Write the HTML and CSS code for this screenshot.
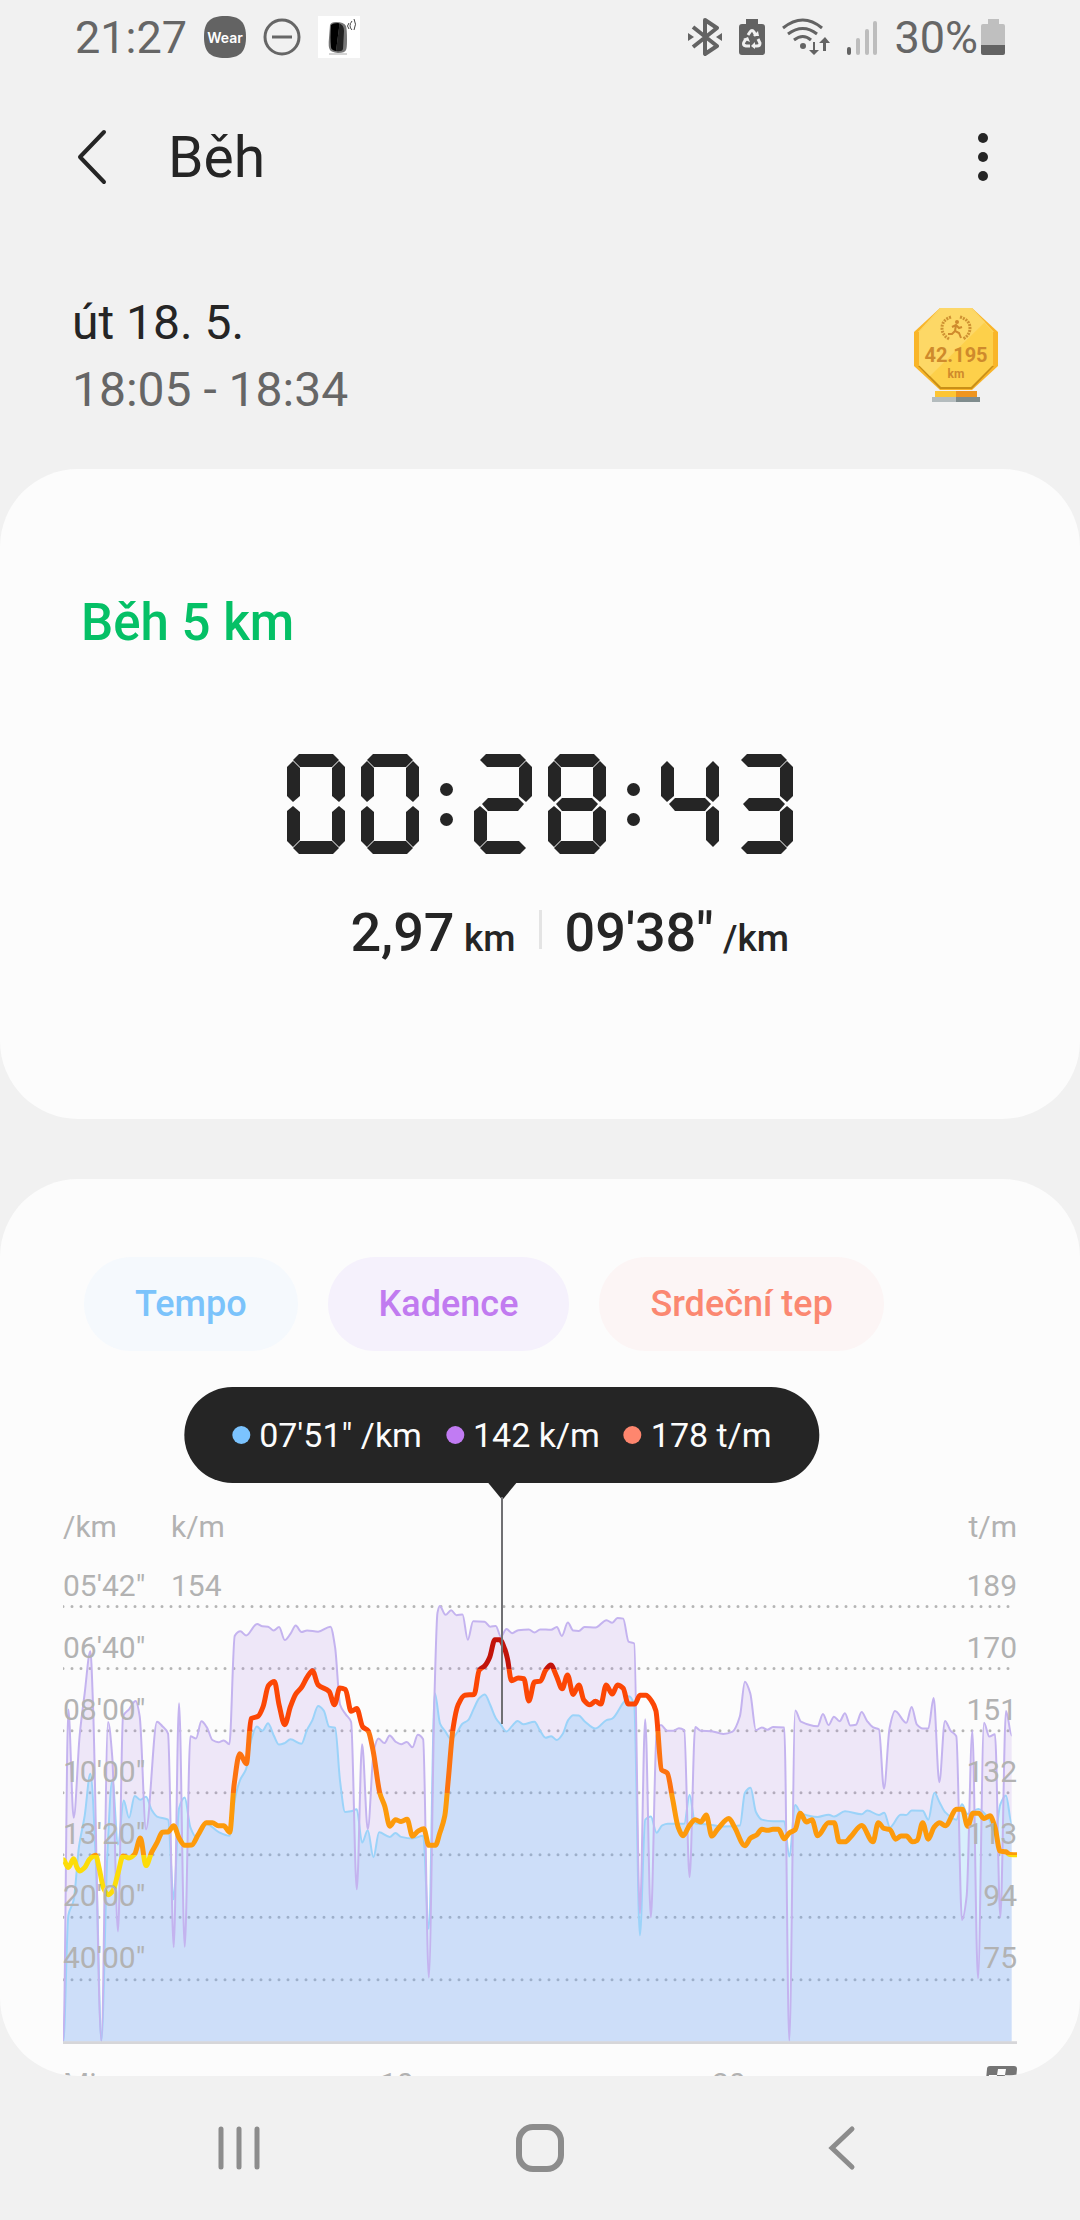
FILE: index.html
```html
<!DOCTYPE html>
<html lang="cs">

<head>
    <meta charset="UTF-8">
    <meta name="viewport" content="width=device-width, initial-scale=1.0">
    <title>Běh</title>

    <link rel="stylesheet" href="styles.css">
</head>

<body>
    <!-- Stavový řádek -->
    <div class="status-bar">
        <div class="status-group">
            <span>21:27</span>
            <svg width="42" height="42" viewBox="0 0 42 42">
                <path d="M21 0C36 0 42 6 42 21S36 42 21 42 0 36 0 21 6 0 21 0Z" fill="#636363"/>
                <text class="wear" x="21" y="27" text-anchor="middle">Wear</text>
            </svg>
            <svg width="38" height="38" viewBox="0 0 38 38" fill="none" stroke="#666">
                <circle cx="19" cy="19" r="17" stroke-width="3"/>
                <path d="M9 19h20" stroke-width="3"/>
            </svg>
            <svg width="42" height="42" viewBox="0 0 42 42">
                <rect width="42" height="42" fill="#fff"/>
                <path d="M12 9q1-3 6-3 8 0 10 4 1 3 1 14 0 8-1 10-1 3-8 3-7-1-8-3-2-3-1-12Z" fill="#777"/>
                <path d="M13 9q2-2 7-2 2 0 1 5l-3 23q-5-1-5-4-1-9 0-22Z" fill="#000"/>
                <path d="M20 7q2 0 1 5l-3 23q6 1 7-2l1-18q0-7-6-8Z" fill="#222"/>
                <path d="M11 38h18" stroke="#aaa" stroke-width="1"/>
                <path d="M31 7q-3 3 0 6M34 5q-4 5 0 9M36 3q3 5 0 11" fill="none" stroke="#444" stroke-width="1"/>
            </svg>
        </div>

        <div class="status-group">
            <svg width="34" height="38" viewBox="0 0 34 38">
                <path d="M5 9 29 28 17 36V2L29 10 5 29" fill="none" stroke="#636363" stroke-width="4" stroke-linejoin="round"/>
                <path d="M0 15v8l6-4ZM34 15v8l-6-4Z" fill="#636363"/>
            </svg>
            <svg width="26" height="36" viewBox="0 0 26 36">
                <path d="M7 0h12v5h4q3 0 3 3v25q0 3-3 3H3q-3 0-3-3V8q0-3 3-3h4Z" fill="#636363"/>
                <path d="M9 16l2-3q2-3 4 0l2 4M19 20l2 4q0 3-3 3h-3M11 27H7q-4-1-2-4l2-3" fill="none" stroke="#f1f1f1" stroke-width="3"/>
                <path d="M14 17h6l-1-5ZM16 23v7l-4-3ZM4 20l5-2 2 5Z" fill="#f1f1f1"/>
            </svg>
            <svg width="48" height="38" viewBox="0 0 48 38">
                <path d="M1 10q20-16 39 0M6 16q15-11 29 0M12 22q9-7 17 0" fill="none" stroke="#636363" stroke-width="3"/>
                <circle cx="21" cy="28" r="3" fill="#636363"/>
                <path d="M31 24v8h-4l5 5 5-5h-4v-8ZM41 33v-8h-4l6-6 5 6h-4v8Z" fill="#636363"/>
            </svg>
            <svg width="30" height="36" viewBox="0 0 30 36" stroke-width="4" stroke-linecap="round">
                <path d="M2 30v4" stroke="#636363"/>
                <path d="M11 21v13M20 12v22M28 4v30" stroke="#bdbdbd"/>
            </svg>
            <span class="battery">
                <span>30%</span>
                <svg width="24" height="36" viewBox="0 0 24 36">
                    <path d="M7 0h11v5h4q2 0 2 2v19H0V7q0-2 2-2h5Z" fill="#bfbfbf"/>
                    <path d="M0 26h24v8q0 2-2 2H2q-2 0-2-2Z" fill="#636363"/>
                </svg>
            </span>
        </div>
    </div>

    <header class="top-bar">
        <a class="back" href="#" aria-label="Zpět">
            <svg width="32" height="56" viewBox="0 0 32 56">
                <path d="M28 3 4 28l24 25" fill="none" stroke="#252525" stroke-width="4" stroke-linecap="round" stroke-linejoin="round"/>
            </svg>
        </a>
        <h1>Běh</h1>
        <button class="more" type="button" aria-label="Další možnosti">
            <svg width="10" height="48" viewBox="0 0 10 48" fill="#252525">
                <circle cx="5" cy="5" r="5"/>
                <circle cx="5" cy="24" r="5"/>
                <circle cx="5" cy="43" r="5"/>
            </svg>
        </button>
    </header>

    <main>
        <section class="date">
            <div>
                <p>út 18. 5.</p>
                <p class="date-time">18:05 - 18:34</p>
            </div>
            <!-- Odznak za vzdálenost -->
            <svg width="84" height="96" viewBox="0 0 84 96">
                <path d="M26 0h32l26 24v34L58 82H26L0 58V24Z" fill="#f9b529"/>
                <path d="M26 0h32l22 24H4Z" fill="#fcd769"/>
                <path d="M4 58 26 81h32l22-23Z" fill="#c98f17"/>
                <path d="M26 2h32l21 22v33L57 79H27L5 57V24Z" fill="#fdd04a"/>
                <path d="M26 2h32l13 12L16 68 5 57V24Z" fill="#fdd866"/>
                <g fill="none" stroke="#cf9232" stroke-width="3" stroke-dasharray="2 1">
                    <path d="M37 9q-9 3-9 11 0 7 7 11"/>
                    <path d="M46 9q10 3 10 11 0 7-7 11"/>
                </g>
                <circle cx="43" cy="14" r="2" fill="#cf8a2c"/>
                <path d="M42 17l-1 6 4 2 2 5M41 23l-3 3h-4M38 19l4-2 3 3 3-1" fill="none" stroke="#cf8a2c" stroke-width="2"/>
                <text class="badge-value" x="42" y="54" text-anchor="middle">42.195</text>
                <text class="badge-unit" x="42" y="70" text-anchor="middle">km</text>
                <path d="M21 83h21v7H21Z" fill="#fdc534"/>
                <path d="M42 83h21v7H42Z" fill="#ee951f"/>
                <path d="M18 89h24v5H18Z" fill="#b4bcbe"/>
                <path d="M42 89h24v5H42Z" fill="#7f8c8d"/>
            </svg>
        </section>

        <section class="card summary">
            <h2>Běh 5 km</h2>
            <div class="timer" id="timer" role="timer" aria-label="00:28:43"></div>
            <div class="stats">
                <p class="distance">2,97 <small>km</small></p>
                <span class="divider"></span>
                <p>09'38" <small>/km</small></p>
            </div>
        </section>

        <section class="card graph">
            <div class="chips">
                <button class="chip tempo" type="button">Tempo</button>
                <button class="chip kadence" type="button">Kadence</button>
                <button class="chip tep" type="button">Srdeční tep</button>
            </div>

            <div class="chart">
                <div class="tooltip">
                    <span class="dot tempo-dot"></span>07'51" /km
                    <span class="dot kadence-dot"></span>142 k/m
                    <span class="dot tep-dot"></span>178 t/m
                </div>
                <div class="cursor"></div>

                <div class="units">
                    <span>/km</span>
                    <span>k/m</span>
                    <span class="right">t/m</span>
                </div>

                <div class="plot">
                    <svg id="plot" viewBox="70 140 2861 1306" preserveAspectRatio="none">
                        <defs>
                            <!-- Barvy tepových zón -->
                            <linearGradient id="zones" gradientUnits="userSpaceOnUse" x1="0" y1="303" x2="0" y2="1440">
                                <stop offset="14.3%" stop-color="#c2140a"/>
                                <stop offset="14.3%" stop-color="#fc4705"/>
                                <stop offset="28.6%" stop-color="#fc4705"/>
                                <stop offset="28.6%" stop-color="#fd7310"/>
                                <stop offset="42.9%" stop-color="#fd7310"/>
                                <stop offset="42.9%" stop-color="#fd9a0b"/>
                                <stop offset="57.2%" stop-color="#fd9a0b"/>
                                <stop offset="57.2%" stop-color="#fcdc0a"/>
                            </linearGradient>
                        </defs>
                        <path class="grid-line" d="M70 303H2916M70 465H2916M70 628H2916M70 790H2916M70 952H2916M70 1115H2916M70 1278H2916"/>
                        <path class="kadence-area" id="kadence-area"/>
                        <path class="tempo-area" id="tempo-area"/>
                        <path class="tempo-line" id="tempo-line"/>
                        <path class="kadence-line" id="kadence-line"/>
                        <path class="base-line" d="M70 1443H2931"/>
                        <path class="tep-line" id="tep-line"/>
                    </svg>
                    <div class="labels">
                        <span>05'42"</span>
                        <span>06'40"</span>
                        <span>08'00"</span>
                        <span>10'00"</span>
                        <span>13'20"</span>
                        <span>20'00"</span>
                        <span>40'00"</span>
                    </div>
                    <div class="labels middle">
                        <span>154</span>
                    </div>
                    <div class="labels right">
                        <span>189</span>
                        <span>170</span>
                        <span>151</span>
                        <span>132</span>
                        <span>113</span>
                        <span>94</span>
                        <span>75</span>
                    </div>
                </div>

                <div class="minutes">
                    <span>Min.</span>
                    <span>10</span>
                    <span>20</span>
                    <svg width="32" height="32" viewBox="0 0 32 32">
                        <path d="M5 0h24q3 0 3 3l-2 21H0L2 3q0-3 3-3Z" fill="#757575"/>
                        <path d="M13 3h8l-1 6h-8ZM4 9h8l-1 7H3ZM20 9h8l-1 7h-8Z" fill="#fcfcfc"/>
                    </svg>
                </div>
            </div>
        </section>
    </main>

    <nav class="nav-bar">
        <button type="button" aria-label="Poslední aplikace">
            <svg width="44" height="48" viewBox="0 0 44 48" stroke="#8c8c8c" stroke-width="5" stroke-linecap="round">
                <path d="M4 5v38M22 5v38M40 5v38"/>
            </svg>
        </button>
        <button type="button" aria-label="Domů">
            <svg width="48" height="48" viewBox="0 0 48 48">
                <rect x="3" y="3" width="42" height="42" rx="14" fill="none" stroke="#8c8c8c" stroke-width="6"/>
            </svg>
        </button>
        <button type="button" aria-label="Zpět">
            <svg width="30" height="48" viewBox="0 0 30 48">
                <path d="M26 5 6 24l20 19" fill="none" stroke="#8c8c8c" stroke-width="5" stroke-linecap="round"/>
            </svg>
        </button>
    </nav>

    <script src="graph.js"></script>
</body>

</html>
```

FILE: styles.css
```css
* {
    box-sizing: border-box;
}

body {
    margin: 0;
    height: 100vh;
    display: flex;
    flex-direction: column;
    background-color: #f1f1f1;
    color: #252525;
    font-family: Roboto, "Noto Sans", sans-serif;
}

h1, h2, p {
    margin: 0;
    font-weight: 400;
}

button {
    border: none;
    padding: 0;
    background: none;
    font-family: inherit;
    cursor: pointer;
}

svg {
    display: block;
}

/* Stavový řádek */
.status-bar {
    display: flex;
    justify-content: space-between;
    align-items: center;
    height: 74px;
    padding: 0 75px;
    color: #666;
    font-size: 45px;
}

.status-group {
    display: flex;
    align-items: center;
    gap: 17px;
}

.battery {
    display: flex;
    align-items: center;
    gap: 3px;
}

.wear {
    fill: #fff;
    font-family: Inter, Roboto, sans-serif;
    font-size: 14px;
    font-weight: 600;
}

/* Hlavička */
.top-bar {
    display: flex;
    align-items: center;
    height: 166px;
    padding: 0 92px 0 76px;
}

.top-bar h1 {
    flex: 1;
    margin-left: 60px;
    font-size: 57px;
}

main {
    flex: 1;
    min-height: 0;
    overflow: hidden;
    border-radius: 0 0 78px 78px;
}

.date {
    display: flex;
    justify-content: space-between;
    align-items: center;
    padding: 49px 82px 46px 72px;
    font-size: 48px;
    line-height: 67px;
}

.date-time {
    color: #666;
}

.badge-value, .badge-unit {
    fill: #cf8a2c;
    font-weight: 700;
}

.badge-value {
    font-size: 20px;
}

.badge-unit {
    font-size: 12px;
}

.card {
    background-color: #fcfcfc;
    border-radius: 78px;
}

/* Souhrn běhu */
.summary {
    padding: 124px 81px 154px;
    margin-bottom: 60px;
}

.summary h2 {
    color: #05c066;
    font-size: 51px;
    font-weight: 500;
    line-height: 60px;
}

.timer {
    display: flex;
    justify-content: center;
    gap: 16px;
    margin: 101px 0 47px;
}

/* Segmentová číslice, segmenty leží přes sebe v jedné buňce */
.digit {
    display: grid;
    width: 58px;
    height: 100px;
}

.digit i {
    grid-area: 1 / 1;
    background-color: #252525;
}

.seg-a { clip-path: polygon(6px 6px, 12px 0, 46px 0, 52px 6px, 45px 13px, 13px 13px); }
.seg-b { clip-path: polygon(52px 7px, 58px 13px, 58px 42px, 52px 48px, 45px 42px, 45px 14px); }
.seg-c { clip-path: polygon(52px 52px, 58px 57px, 58px 87px, 52px 93px, 45px 86px, 45px 58px); }
.seg-d { clip-path: polygon(6px 94px, 13px 87px, 45px 87px, 52px 94px, 46px 100px, 12px 100px); }
.seg-e { clip-path: polygon(6px 52px, 13px 58px, 13px 86px, 6px 93px, 0 87px, 0 57px); }
.seg-f { clip-path: polygon(6px 7px, 13px 14px, 13px 42px, 6px 48px, 0 42px, 0 13px); }
.seg-g { clip-path: polygon(8px 50px, 14px 44px, 44px 44px, 50px 50px, 44px 57px, 14px 57px); }

.colon {
    display: flex;
    flex-direction: column;
    align-items: center;
    gap: 17px;
    width: 23px;
    padding-top: 29px;
}

.colon i {
    width: 13px;
    height: 13px;
    border-radius: 50%;
    background-color: #252525;
}

.stats {
    display: grid;
    grid-template-columns: 1fr 3px 1fr;
    gap: 23px;
    font-size: 54px;
    line-height: 64px;
}

.stats p {
    font-weight: 500;
}

.stats small {
    margin-left: -4px;
    font-size: 37px;
    line-height: 1;
}

.distance {
    text-align: right;
}

.divider {
    height: 39px;
    margin-top: 9px;
    background-color: #e4e4e4;
}

/* Graf */
.graph {
    padding: 78px 63px 0;
}

.chips {
    display: flex;
    gap: 30px;
    margin: 0 21px 36px;
}

.chip {
    height: 94px;
    padding: 0 51px;
    border-radius: 47px;
    font-size: 36px;
    font-weight: 500;
}

.tempo {
    color: #7bc3fb;
    background-color: #f5f9fd;
}

.kadence {
    color: #c17bf0;
    background-color: #f5f1fc;
}

.tep {
    color: #fb8871;
    background-color: #fcf5f5;
}

.chart {
    position: relative;
    padding-top: 122px;
    color: #b2b2b2;
    font-size: 30px;
    line-height: 35px;
}

.tooltip {
    position: absolute;
    top: 0;
    left: 46%;
    transform: translateX(-50%);
    display: flex;
    align-items: center;
    height: 96px;
    padding: 0 48px;
    border-radius: 48px;
    background-color: #252525;
    color: #fcfcfc;
    font-size: 34px;
    white-space: nowrap;
}

.tooltip::after {
    content: "";
    position: absolute;
    top: 100%;
    left: 50%;
    margin-left: -14px;
    border: 14px solid transparent;
    border-top: 17px solid #252525;
    border-bottom: 0;
}

.cursor {
    position: absolute;
    top: 110px;
    left: 46%;
    margin-left: -1px;
    width: 2px;
    height: 227px;
    background-color: #707073;
    z-index: 1;
}

.dot {
    width: 18px;
    height: 18px;
    margin: 0 9px 0 24px;
    border-radius: 50%;
}

.dot:first-child {
    margin-left: 0;
}

.tempo-dot {
    background-color: #7bc3fe;
}

.kadence-dot {
    background-color: #c17bf3;
}

.tep-dot {
    background-color: #fe866e;
}

.units, .plot {
    display: grid;
    grid-template-columns: 108px 1fr 1fr;
}

.right {
    text-align: right;
}

/* Popisky leží přes graf ve stejném řádku mřížky */
.plot svg {
    grid-area: 1 / 1 / 2 / 4;
    width: 100%;
    height: 500px;
}

.labels {
    grid-row: 1;
    grid-column: 1;
    display: grid;
    grid-template-rows: repeat(7, 62px);
}

.labels.middle {
    grid-column: 2;
}

.labels.right {
    grid-column: 3;
}

.labels span {
    align-self: end;
    padding-bottom: 3px;
}

.plot path {
    fill: none;
    vector-effect: non-scaling-stroke;
    stroke-linejoin: round;
}

.plot .grid-line {
    stroke: #b5b5b5;
    stroke-width: 3px;
    stroke-linecap: round;
    stroke-dasharray: 0 9;
}

.plot .base-line {
    stroke: #d6d6d9;
    stroke-width: 3px;
}

.plot .kadence-area {
    fill: rgba(170, 130, 232, 0.17);
}

.plot .tempo-area {
    fill: rgba(75, 188, 253, 0.2);
}

.plot .kadence-line {
    stroke: #c4b3ef;
    stroke-width: 2px;
}

.plot .tempo-line {
    stroke: #9bd3f9;
    stroke-width: 2px;
}

.plot .tep-line {
    stroke: url(#zones);
    stroke-width: 5px;
}

.minutes {
    display: grid;
    grid-template-columns: 317fr 332fr 273fr 32px;
    margin-top: 22px;
}

/* Navigační lišta */
.nav-bar {
    display: grid;
    grid-template-columns: repeat(3, 1fr);
    height: 144px;
    padding: 0 88px;
}

.nav-bar button {
    display: flex;
    justify-content: center;
    align-items: center;
}
```

FILE: graph.js
```js
// Segmenty rozsvícené pro každou číslici
const segmenty = {
    0: 'abcdef', 1: 'bc', 2: 'abged', 3: 'abgcd', 4: 'fgbc',
    5: 'afgcd', 6: 'afgedc', 7: 'abc', 8: 'abcdefg', 9: 'abcdfg'
};

function vykresliCas(cas) {
    const timer = document.getElementById('timer');
    for (const znak of cas) {
        const prvek = document.createElement('span');
        if (znak === ':') {
            prvek.className = 'colon';
            prvek.innerHTML = '<i></i><i></i>';
        } else {
            prvek.className = 'digit';
            for (const s of segmenty[znak]) {
                prvek.innerHTML += '<i class="seg-' + s + '"></i>';
            }
        }
        timer.appendChild(prvek);
    }
}

// Body grafu: x, y, x, y, ...
const kadence = [
    71,1440, 86,572, 102,855, 120,640, 135,530, 152,420, 160,560, 185,1438, 205,605, 218,700, 235,1152, 250,590,
    268,572, 288,550, 300,590, 319,885, 352,604, 368,616, 385,635, 402,1193, 418,556, 435,1192, 452,642, 469,648,
    485,603, 502,620, 518,652, 536,658, 552,653, 569,663, 585,380, 602,368, 619,379, 652,349, 668,355, 685,356,
    702,366, 718,357, 735,391, 752,375, 768,353, 785,370, 802,366, 835,369, 872,356, 886,410, 901,560, 918,585,
    934,605, 951,1042, 967,663, 984,885, 1002,680, 1016,648, 1034,660, 1050,640, 1067,656, 1084,663, 1101,657,
    1118,671, 1134,638, 1150,650, 1167,1272, 1184,540, 1193,320, 1200,302, 1217,325, 1234,313, 1250,326, 1268,324,
    1284,390, 1300,342, 1334,343, 1351,356, 1368,354, 1383,382, 1400,362, 1417,373, 1435,365, 1467,363, 1484,371,
    1501,363, 1534,364, 1551,357, 1566,380, 1584,345, 1600,366, 1617,367, 1634,357, 1667,358, 1700,339, 1717,346,
    1733,333, 1750,335, 1766,395, 1783,400, 1800,1105, 1816,598, 1833,1115, 1850,640, 1863,613, 1882,628, 1900,628,
    1917,621, 1933,626, 1949,1010, 1966,618, 1983,628, 2015,629, 2050,636, 2078,630, 2100,590, 2115,500, 2131,530,
    2148,626, 2166,619, 2183,625, 2199,618, 2233,619, 2248,1438, 2266,575, 2283,604, 2333,616, 2349,584, 2366,613,
    2382,591, 2399,603, 2415,582, 2431,614, 2448,612, 2465,579, 2482,603, 2500,619, 2517,624, 2532,779, 2549,620,
    2565,576, 2599,607, 2615,566, 2631,612, 2648,622, 2665,622, 2681,542, 2698,762, 2715,602, 2732,628, 2749,642,
    2766,1122, 2780,1060, 2797,628, 2814,1275, 2832,607, 2848,643, 2865,637, 2881,1115, 2898,576, 2915,640
];

const tempo = [
    71,1440, 86,1110, 102,1070, 118,930, 135,850, 152,740, 170,1000, 185,1438, 203,950, 218,755, 235,925, 252,810,
    268,855, 285,798, 302,808, 319,800, 336,835, 352,852, 385,860, 402,1068, 418,830, 435,802, 452,880, 469,905,
    502,872, 536,892, 569,902, 587,800, 602,755, 619,728, 635,650, 651,617, 668,628, 685,608, 702,640, 718,664,
    735,660, 752,650, 785,662, 802,625, 818,600, 835,563, 852,575, 868,617, 886,620, 901,760, 916,840, 934,838,
    951,833, 967,920, 984,888, 1001,958, 1018,893, 1050,905, 1067,895, 1084,905, 1118,909, 1150,902, 1167,1145,
    1185,530, 1201,610, 1217,630, 1234,650, 1250,635, 1267,610, 1285,600, 1302,570, 1318,543, 1335,533, 1351,560,
    1368,595, 1383,612, 1400,630, 1417,615, 1433,602, 1450,611, 1484,604, 1501,628, 1517,646, 1534,642, 1551,652,
    1568,637, 1585,600, 1600,587, 1617,588, 1634,603, 1667,622, 1700,600, 1717,596, 1750,555, 1767,538, 1783,560,
    1800,1162, 1816,860, 1833,852, 1850,894, 1867,875, 1884,871, 1933,871, 1949,795, 1966,870, 2000,872, 2050,878,
    2100,875, 2115,790, 2132,777, 2148,840, 2166,860, 2200,864, 2233,864, 2248,956, 2266,822, 2283,843, 2333,853,
    2366,847, 2383,852, 2415,838, 2465,846, 2482,836, 2517,848, 2533,842, 2550,880, 2582,847, 2599,848, 2615,836,
    2648,837, 2665,860, 2683,790, 2699,815, 2715,840, 2749,860, 2766,820, 2782,845, 2815,832, 2848,860, 2865,900,
    2881,820, 2898,797, 2915,870
];

const tep = [
    71,965, 86,985, 102,962, 112,985, 120,994, 135,985, 150,963, 168,953, 178,985, 192,1040, 205,1056, 220,1045,
    235,1000, 250,955, 268,960, 285,950, 302,908, 319,980, 336,945, 352,920, 368,893, 385,892, 402,876, 418,908,
    435,927, 456,926, 475,900, 500,868, 518,868, 536,876, 552,876, 570,893, 583,770, 600,688, 620,714, 634,596,
    655,590, 670,565, 686,510, 704,499, 718,560, 735,612, 752,565, 768,532, 785,515, 802,488, 818,471, 835,508,
    868,525, 884,560, 900,516, 917,520, 934,577, 951,570, 969,618, 985,628, 1000,680, 1020,790, 1035,825, 1050,877,
    1067,860, 1084,865, 1102,859, 1118,903, 1135,890, 1152,884, 1167,927, 1187,927, 1200,895, 1215,850, 1225,760,
    1240,620, 1255,560, 1275,535, 1303,533, 1318,470, 1335,458, 1350,435, 1365,390, 1380,390, 1395,415, 1403,440,
    1415,497, 1435,490, 1452,492, 1467,550, 1484,500, 1502,498, 1517,470, 1533,456, 1550,485, 1567,518, 1583,482,
    1600,533, 1617,508, 1632,548, 1650,560, 1667,551, 1683,558, 1699,508, 1717,532, 1733,508, 1750,517, 1765,558,
    1785,558, 1800,535, 1818,535, 1835,550, 1848,575, 1865,730, 1882,738, 1898,805, 1915,880, 1930,902, 1948,876,
    1966,860, 1983,866, 1999,848, 2016,903, 2033,885, 2067,857, 2084,880, 2115,928, 2132,908, 2150,900, 2166,885,
    2183,888, 2199,885, 2216,885, 2233,910, 2248,895, 2266,886, 2281,843, 2299,866, 2316,860, 2333,902, 2366,868,
    2383,868, 2398,918, 2415,918, 2432,905, 2465,875, 2499,918, 2515,868, 2532,883, 2550,886, 2567,911, 2583,903,
    2600,903, 2617,918, 2632,914, 2648,868, 2665,911, 2682,880, 2699,868, 2716,876, 2750,833, 2767,833, 2783,877,
    2799,843, 2816,843, 2832,857, 2850,850, 2865,880, 2880,942, 2897,944, 2910,951, 2931,952
];

// Hladká křivka, která v extrémech nepřestřelí
function krivka(data) {
    const body = [];
    for (let i = 0; i < data.length; i += 2) {
        body.push([data[i], data[i + 1]]);
    }
    const sklon = body.map((b, i) => {
        if (i === 0 || i === body.length - 1) return 0;
        const k1 = (b[1] - body[i - 1][1]) / (b[0] - body[i - 1][0]);
        const k2 = (body[i + 1][1] - b[1]) / (body[i + 1][0] - b[0]);
        return k1 * k2 <= 0 ? 0 : 2 * k1 * k2 / (k1 + k2);
    });
    let d = 'M' + body[0];
    for (let i = 1; i < body.length; i++) {
        const [x0, y0] = body[i - 1];
        const [x1, y1] = body[i];
        const t = (x1 - x0) / 3;
        d += 'C' + [x0 + t, y0 + sklon[i - 1] * t, x1 - t, y1 - sklon[i] * t, x1, y1];
    }
    return d;
}

function vykresliKrivku(id, data) {
    document.getElementById(id + '-line').setAttribute('d', krivka(data));
    const plocha = document.getElementById(id + '-area');
    if (plocha) {
        plocha.setAttribute('d', krivka(data) + 'V1440H71Z');
    }
}

vykresliCas('00:28:43');
vykresliKrivku('kadence', kadence);
vykresliKrivku('tempo', tempo);
vykresliKrivku('tep', tep);
```
